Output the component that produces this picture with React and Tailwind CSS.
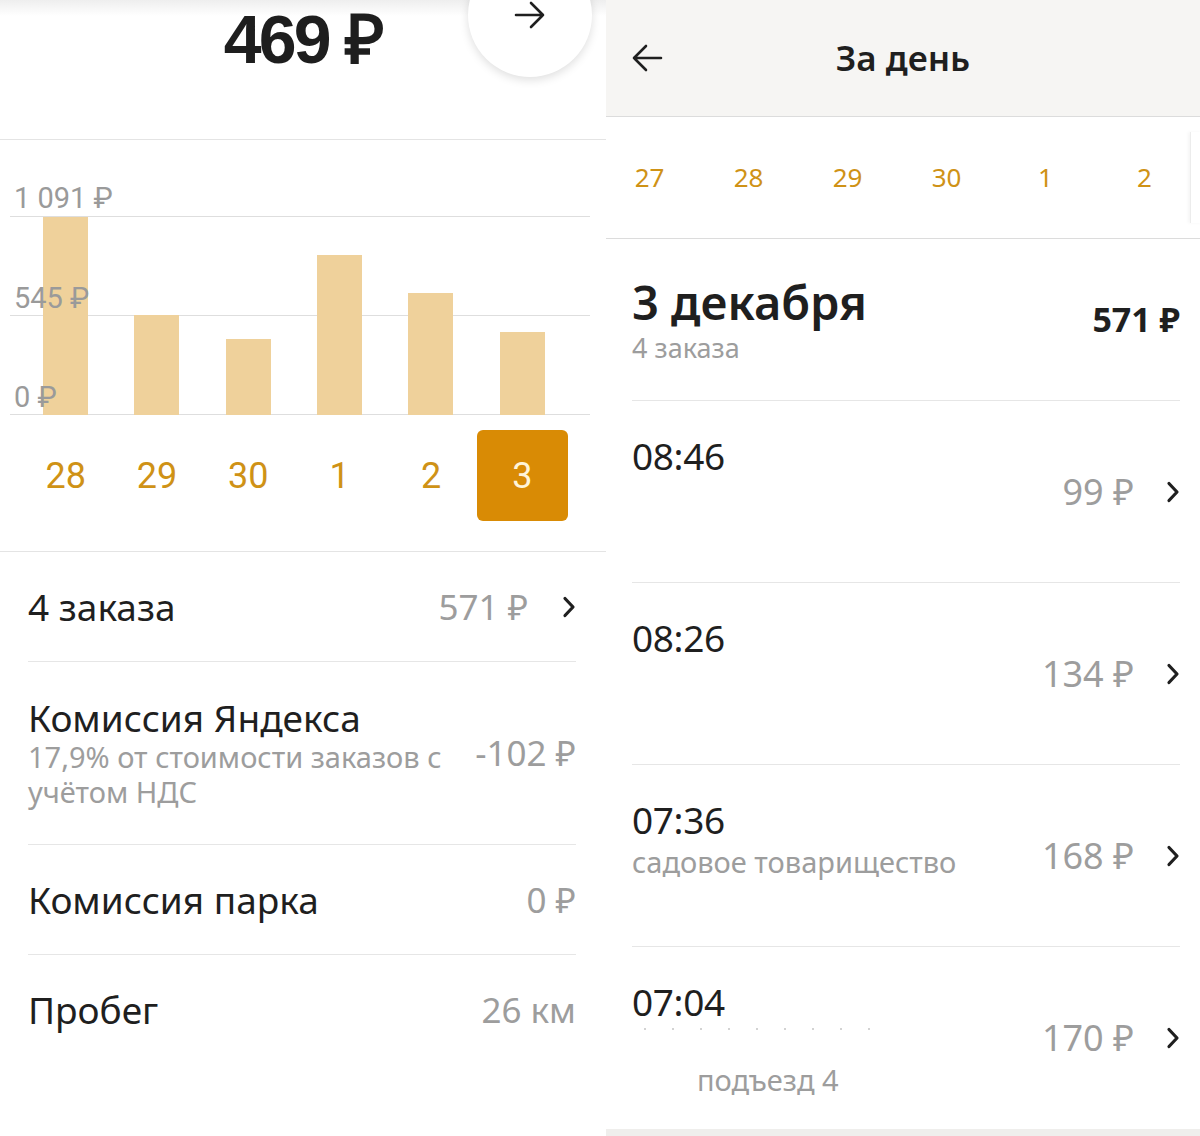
// App.jsx — два экрана заработка: слева сводка за неделю, справа заказы за день

const ArrowRight = () => (
  <svg width="34" height="30" viewBox="0 0 34 30" fill="none" stroke="#1f1f1f" strokeWidth="2.6" strokeLinecap="round" strokeLinejoin="round">
    <path d="M3 15h27M18 3l12 12-12 12" />
  </svg>
);

const ArrowLeft = () => (
  <svg width="34" height="30" viewBox="0 0 34 30" fill="none" stroke="#1f1f1f" strokeWidth="2.6" strokeLinecap="round" strokeLinejoin="round">
    <path d="M31 15H4M16 3L4 15l12 12" />
  </svg>
);

const Chevron = () => (
  <svg width="14" height="24" viewBox="0 0 14 24" fill="none" stroke="#1f1f1f" strokeWidth="3.2" strokeLinecap="round" strokeLinejoin="round">
    <path d="M3 3.5l8 8.5-8 8.5" />
  </svg>
);

const bars = [
  { day: "28", h: 198 },
  { day: "29", h: 100 },
  { day: "30", h: 76 },
  { day: "1", h: 160 },
  { day: "2", h: 122 },
  { day: "3", h: 83, active: true },
];

const orders = [
  { time: "08:46", price: "99 ₽" },
  { time: "08:26", price: "134 ₽" },
  { time: "07:36", price: "168 ₽", sub: "садовое товарищество" },
  { time: "07:04", price: "170 ₽", redacted: true, sub: "подъезд 4" },
];

// --- левая панель ---
const SummaryRow = ({ label, value, chevron, className }) => (
  <div className={`flex items-center justify-between border-b border-[#e6e6e6] ${className}`}>
    <span className="text-[37px] leading-[44px] text-[#1f1f1f]">{label}</span>
    <div className="flex items-center gap-[34px]">
      <span className="text-[35px] leading-[44px] text-[#9d9d9d]">{value}</span>
      {chevron && <Chevron />}
    </div>
  </div>
);

const WeekPanel = () => (
  <div className="w-[606px] shrink-0 bg-white flex flex-col">
    <header className="relative h-[140px] border-b border-[#e4e4e4] bg-[linear-gradient(#eeeeee,#ffffff_16px)]">
      <div className="pt-[5px] text-center text-[68px] leading-none font-bold tracking-[-0.04em] text-[#1e1e1e] font-['Liberation_Sans',sans-serif]">
        469 ₽
      </div>
      {/* плавающая кнопка, верх срезан краем экрана */}
      <div className="absolute left-[468px] top-[-47px] w-[124px] h-[124px] rounded-full bg-white shadow-[0_3px_10px_rgba(0,0,0,0.13)] flex items-center justify-center">
        <ArrowRight />
      </div>
    </header>

    <section className="border-b border-[#e4e4e4] pb-[30px] font-['Roboto',sans-serif]">
      <div className="relative h-[275px]">
        <div className="absolute left-[10px] right-[16px] top-[76px] h-px bg-[#dedede]" />
        <div className="absolute left-[10px] right-[16px] top-[175px] h-px bg-[#dedede]" />
        <div className="absolute left-[10px] right-[16px] top-[274px] h-px bg-[#dedede]" />
        <div className="relative grid grid-cols-6 items-end h-full pl-[20px] pr-[38px]">
          {bars.map((b) => (
            <div key={b.day} className="mx-auto w-[45px] bg-[#efd19b]" style={{ height: b.h }} />
          ))}
        </div>
        <span className="absolute left-[14px] top-[44px] text-[29px] leading-none text-[#9a9a9a]">1 091 ₽</span>
        <span className="absolute left-[14px] top-[144px] text-[29px] leading-none text-[#9a9a9a]">545 ₽</span>
        <span className="absolute left-[14px] top-[243px] text-[29px] leading-none text-[#9a9a9a]">0 ₽</span>
      </div>
      <div className="grid grid-cols-6 pl-[20px] pr-[38px] mt-[15px]">
        {bars.map((b) =>
          b.active ? (
            <div key={b.day} className="h-[91px] flex items-center justify-center rounded-[6px] bg-[#d98b05] text-[36px] text-[#fff4d8]">
              {b.day}
            </div>
          ) : (
            <div key={b.day} className="h-[91px] flex items-center justify-center text-[36px] text-[#cf9216]">
              {b.day}
            </div>
          )
        )}
      </div>
    </section>

    <div className="pl-[28px] pr-[30px]">
      <SummaryRow label="4 заказа" value="571 ₽" chevron className="h-[110px]" />
      <div className="flex items-center justify-between h-[183px] border-b border-[#e6e6e6]">
        <div>
          <div className="text-[37px] leading-[42px] text-[#1f1f1f]">Комиссия Яндекса</div>
          <div className="text-[29px] leading-[35px] text-[#9d9d9d]">
            17,9% от стоимости заказов с
            <br />
            учётом НДС
          </div>
        </div>
        <span className="text-[35px] leading-[44px] text-[#9d9d9d]">-102 ₽</span>
      </div>
      <SummaryRow label="Комиссия парка" value="0 ₽" className="h-[110px]" />
      <SummaryRow label="Пробег" value="26 км" className="h-[109px] border-b-0" />
    </div>
  </div>
);

// --- правая панель ---
const days = ["27", "28", "29", "30", "1", "2"];

const OrderRow = ({ order, last }) => (
  <div className={`flex justify-between h-[182px] ${last ? "" : "border-b border-[#e6e6e6]"}`}>
    <div className="pt-[33px]">
      <div className="text-[37px] leading-[44px] tracking-[-0.01em] text-[#1f1f1f]">{order.time}</div>
      {order.redacted && (
        <div className="h-[39px] flex items-start gap-[26px] pl-[12px] pt-[4px]">
          {[0, 1, 2, 3, 4, 5, 6, 7, 8].map((i) => (
            <span key={i} className="w-[2px] h-[2px] rounded-full bg-[#c4c4c4]" />
          ))}
        </div>
      )}
      {order.sub && (
        <div
          className={`text-[29px] leading-[34px] text-[#9d9d9d] ${
            order.redacted ? "pl-[65px]" : "mt-[3px]"
          }`}
        >
          {order.sub}
        </div>
      )}
    </div>
    <div className="self-center flex items-center gap-[32px]">
      <span className="text-[36px] leading-[44px] text-[#9d9d9d]">{order.price}</span>
      <Chevron />
    </div>
  </div>
);

const DayPanel = () => (
  <div className="flex-1 flex flex-col bg-white">
    <header className="h-[117px] shrink-0 bg-[#f6f5f3] border-b border-[#dcdcdc] grid grid-cols-[80px_1fr_80px] items-center">
      <div className="pl-[24px]">
        <ArrowLeft />
      </div>
      <h1 className="text-center text-[35px] font-semibold text-[#1f1f1f]">За день</h1>
      <div />
    </header>

    <div className="relative h-[122px] shrink-0 border-b border-[#dcdcdc] flex items-center overflow-hidden">
      <div className="flex -ml-[6px]">
        {days.map((d) => (
          <div key={d} className="w-[99px] text-center text-[26px] text-[#cf9216]">
            {d}
          </div>
        ))}
      </div>
      {/* край следующей карточки даты */}
      <div className="absolute left-[584px] top-[15px] bottom-[15px] w-[12px] bg-white border-l border-[#ececec] shadow-[-2px_0_3px_rgba(0,0,0,0.04)]" />
    </div>

    <div className="pl-[26px] pr-[20px]">
      <div className="h-[162px] border-b border-[#e6e6e6] flex items-center justify-between">
        <div>
          <div className="text-[47px] leading-[56px] font-semibold text-[#1f1f1f]">3 декабря</div>
          <div className="text-[27px] leading-[36px] text-[#9d9d9d]">4 заказа</div>
        </div>
        <span className="text-[34px] font-bold text-[#1f1f1f]">571 ₽</span>
      </div>
      {orders.map((o, i) => (
        <OrderRow key={o.time} order={o} last={i === orders.length - 1} />
      ))}
    </div>
    <div className="flex-1 bg-[#efeeec]" />
  </div>
);

export default function App() {
  return (
    <div className="w-[1200px] h-[1136px] overflow-hidden flex bg-white font-['Noto_Sans','DejaVu_Sans',sans-serif]">
      <WeekPanel />
      <DayPanel />
    </div>
  );
}
